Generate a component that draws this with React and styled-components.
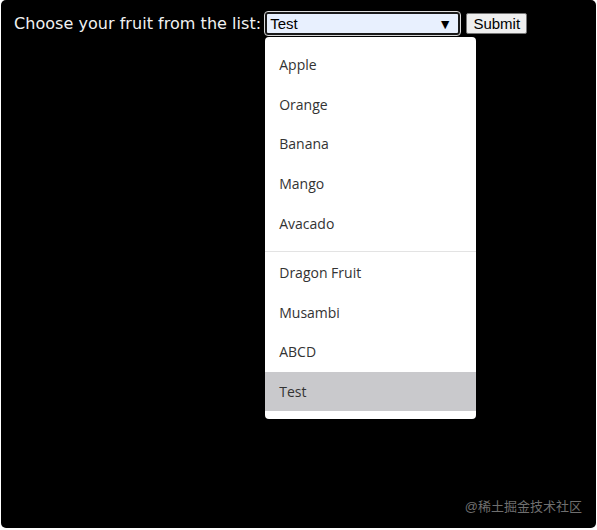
import React from "react";
import styled, { createGlobalStyle } from "styled-components";

const GlobalStyle = createGlobalStyle`
  html, body {
    margin: 0;
    padding: 0;
    background: #ffffff;
  }
`;

const Screen = styled.div`
  position: relative;
  display: flex;
  flex-direction: column;
  width: 595px;
  height: 528px;
  margin-left: 1px;
  background: #000000;
  border-radius: 5px;
  box-sizing: border-box;
  padding: 11px 14px 13px 13px;
`;

const FormRow = styled.form`
  display: flex;
  align-items: center;
  height: 25px;
`;

const Label = styled.label`
  font-family: "DejaVu Sans", "Liberation Sans", sans-serif;
  font-size: 16px;
  letter-spacing: 0.04px;
  color: #f2f2f2;
  margin-right: 4px;
  white-space: nowrap;
`;

const SelectWrap = styled.div`
  position: relative;
`;

const SelectBox = styled.div`
  display: flex;
  align-items: center;
  justify-content: space-between;
  width: 195px;
  height: 23px;
  box-sizing: border-box;
  padding: 0 6px 0 3px;
  background: #e8f0fe;
  border: 2px solid #1a1a1a;
  outline: 1px solid #dcdcdc;
  border-radius: 3px;
  font-family: "Liberation Sans", Arial, sans-serif;
  font-size: 15px;
  color: #000;
`;

const Caret = styled.span`
  font-size: 14px;
  line-height: 1;
`;

const SubmitButton = styled.button`
  margin-left: 6px;
  width: 61px;
  height: 21px;
  padding: 0;
  background: #efefef;
  border: 1px solid #767676;
  border-radius: 2px;
  font-family: "Liberation Sans", Arial, sans-serif;
  font-size: 15px;
  color: #000;
`;

const Menu = styled.ul`
  position: absolute;
  top: 25px;
  left: 0;
  width: 211px;
  margin: 0;
  padding: 0;
  list-style: none;
  background: #ffffff;
  border-radius: 4px;
  box-shadow: 0 2px 6px rgba(0, 0, 0, 0.25);
  overflow: hidden;
  z-index: 2;
`;

const Group = styled.li`
  padding: ${(p) => (p.$divided ? "1px 0 8px" : "8px 0")};
  border-top: ${(p) => (p.$divided ? "1px solid #e3e3e3" : "none")};
`;

const Option = styled.div`
  display: flex;
  align-items: center;
  height: 39.6px;
  padding-left: 14px;
  font-family: "Open Sans", "Noto Sans", sans-serif;
  font-size: 14px;
  color: #333333;
  background: ${(p) => (p.$selected ? "#c9c9cc" : "transparent")};
`;

const Watermark = styled.div`
  margin-top: auto;
  align-self: flex-end;
  font-family: "Liberation Sans", "Noto Sans CJK SC", sans-serif;
  font-size: 13px;
  color: #6f6f6f;
`;

const groups = [
  ["Apple", "Orange", "Banana", "Mango", "Avacado"],
  ["Dragon Fruit", "Musambi", "ABCD", "Test"],
];

const App = () => {
  const selected = "Test";
  return (
    <>
      <GlobalStyle />
      <Screen>
        <FormRow>
          <Label>Choose your fruit from the list:</Label>
          <SelectWrap>
            <SelectBox>
              <span>{selected}</span>
              <Caret>▼</Caret>
            </SelectBox>
            <Menu>
              {groups.map((items, i) => (
                <Group key={i} $divided={i > 0}>
                  {items.map((name) => (
                    <Option key={name} $selected={name === selected}>
                      {name}
                    </Option>
                  ))}
                </Group>
              ))}
            </Menu>
          </SelectWrap>
          <SubmitButton type="button">Submit</SubmitButton>
        </FormRow>
        <Watermark>@稀土掘金技术社区</Watermark>
      </Screen>
    </>
  );
};

export default App;
